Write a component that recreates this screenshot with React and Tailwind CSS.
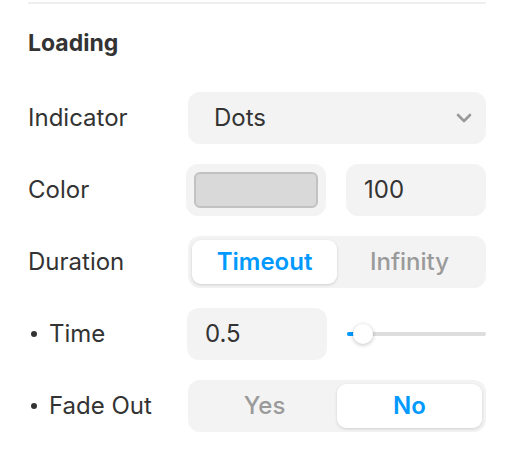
import React from "react";

function Row({ label, bullet, children }) {
  return (
    <div className="flex h-[52px] items-center">
      <div className="flex w-[158px] items-center text-[24px] text-[#333333]">
        {bullet && <span className="mr-[12px] ml-[3px] h-[6px] w-[6px] rounded-full bg-[#333333]" />}
        <span>{label}</span>
      </div>
      <div className="flex flex-1 items-center">{children}</div>
    </div>
  );
}

function Segmented({ options, active }) {
  return (
    <div className="ml-[2px] flex h-[52px] flex-1 rounded-[12px] bg-[#f3f3f3] p-[4px]">
      {options.map((o, i) => (
        <div
          key={o}
          className={
            i === active
              ? "flex flex-1 items-center justify-center rounded-[9px] bg-white text-[24px] font-semibold text-[#0099ff] shadow-[0_1px_3px_rgba(0,0,0,0.15)]"
              : "flex flex-1 items-center justify-center text-[24px] font-medium text-[#9a9a9a]"
          }
        >
          {o}
        </div>
      ))}
    </div>
  );
}

export default function App() {
  return (
    <div
      className="h-[470px] w-[508px] bg-white pl-[28px] pr-[22px] pt-[2px]"
      style={{ fontFamily: "Inter, 'Noto Sans', sans-serif" }}
    >
      <div className="h-[2px] bg-[#efefef]" />
      <div className="mt-[22px] h-[34px] text-[23px] font-bold leading-[34px] text-[#333333]">Loading</div>
      <div className="mt-[32px] flex flex-col gap-[20px]">
        <Row label="Indicator">
          <div className="ml-[2px] flex h-[52px] flex-1 items-center justify-between rounded-[12px] bg-[#f3f3f3] pl-[26px] pr-[14px] text-[24px] text-[#333333]">
            <span>Dots</span>
            <svg width="16" height="10" viewBox="0 0 16 10" fill="none">
              <path d="M2 2l6 6 6-6" stroke="#999999" strokeWidth="2.6" strokeLinecap="round" strokeLinejoin="round" />
            </svg>
          </div>
        </Row>
        <Row label="Color">
          <div className="flex flex-1 gap-[20px]">
            <div className="flex h-[52px] w-[140px] items-center rounded-[12px] bg-[#f3f3f3] p-[8px]">
              <div className="h-full w-full rounded-[6px] border-2 border-[#c2c2c2] bg-[#d9d9d9]" />
            </div>
            <div className="flex h-[52px] w-[140px] items-center rounded-[12px] bg-[#f3f3f3] pl-[18px] text-[24px] text-[#333333]">
              100
            </div>
          </div>
        </Row>
        <Row label="Duration">
          <Segmented options={["Timeout", "Infinity"]} active={0} />
        </Row>
        <Row label="Time" bullet>
          <div className="flex flex-1 items-center gap-[20px]">
            <div className="ml-[1px] flex h-[52px] w-[140px] items-center rounded-[12px] bg-[#f3f3f3] pl-[18px] text-[24px] text-[#333333]">
              0.5
            </div>
            <div className="relative flex h-[20px] flex-1 items-center">
              <div className="h-[4px] w-full rounded-full bg-[#dddddd]" />
              <div className="absolute left-0 top-[8px] h-[4px] w-[12px] rounded-full bg-[#0099ff]" />
              <div className="absolute left-[6px] top-0 h-[20px] w-[20px] rounded-full bg-white shadow-[0_1px_4px_rgba(0,0,0,0.25)]" />
            </div>
          </div>
        </Row>
        <Row label="Fade Out" bullet>
          <Segmented options={["Yes", "No"]} active={1} />
        </Row>
      </div>
    </div>
  );
}
